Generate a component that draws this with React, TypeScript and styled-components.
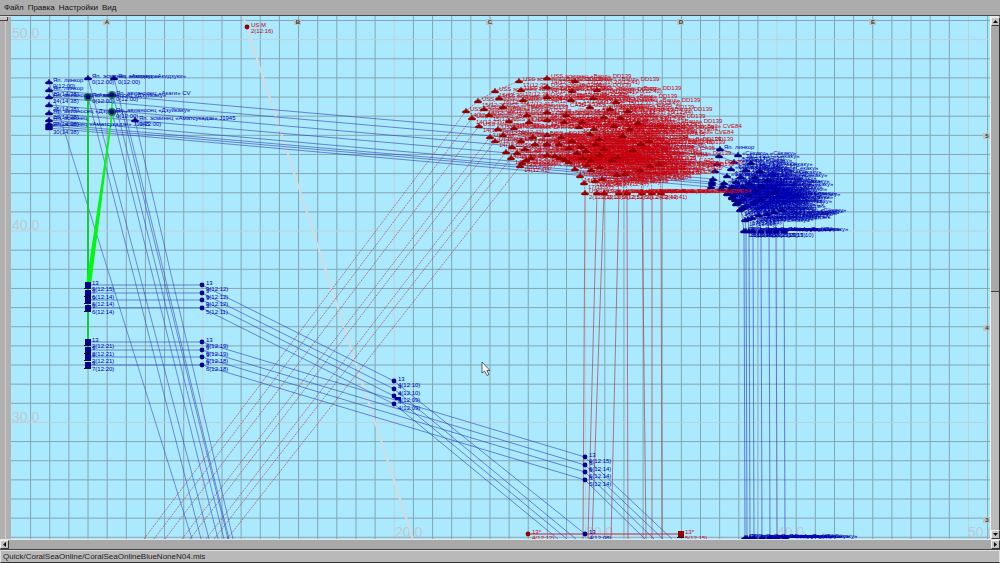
import React from "react";
import styled, { createGlobalStyle } from "styled-components";

const GlobalStyle = createGlobalStyle`
  *, *::before, *::after { box-sizing: border-box; }
  body { margin: 0; background: #acacac; font-family: "Liberation Sans", Arial, sans-serif; }
`;

const Window = styled.div`
  display: flex;
  flex-direction: column;
  height: 100vh;
  background: #acacac;
  overflow: hidden;
`;

const MenuBar = styled.nav`
  display: flex;
  flex: none;
  gap: 4px;
  height: 16px;
  padding: 0 4px;
  border-bottom: 1px solid #4c4c4c;
`;

const MenuItem = styled.button`
  padding: 0;
  border: 0;
  background: none;
  color: #141414;
  font: 8px/15px "Liberation Sans", Arial, sans-serif;
`;

const Workspace = styled.main`
  display: flex;
  flex: 1;
  min-height: 0;
`;

const Gutter = styled.div`
  display: flex;
  flex: none;
  width: 11px;
  background: #b0b0b0;
  border-top: 1px solid #d8d8d8;
`;

const GutterSlider = styled.div`
  width: 6px;
  border-right: 1px solid #cfcfcf;

  &::before {
    content: "";
    display: block;
    width: 8px;
    height: 4px;
    background: #c4c4c4;
    border-right: 1px solid #404040;
    border-bottom: 1px solid #404040;
  }
`;

const MapSurface = styled.svg`
  display: block;
  flex: 1;
  min-width: 0;
  height: 100%;
  background: #abe9ff;
`;

const Track = styled.div<{ $vertical?: boolean }>`
  display: flex;
  flex: none;
  flex-direction: ${(p) => (p.$vertical ? "column" : "row")};
  width: ${(p) => (p.$vertical ? "10px" : "auto")};
  height: ${(p) => (p.$vertical ? "auto" : "11px")};
  background: ${(p) => (p.$vertical ? "#bababa" : "#a8a8a8")};
  border-top: 1px solid #e6e6e6;
  border-bottom: ${(p) => (p.$vertical ? "0" : "1px solid #444")};
  border-left: ${(p) => (p.$vertical ? "1px solid #f4f4f4" : "0")};
  border-right: ${(p) => (p.$vertical ? "1px solid #303030" : "0")};
`;

const Thumb = styled.div<{ $size: string }>`
  flex: 0 0 ${(p) => p.$size};
  background: #a8a8a8;
  border-bottom: 1px solid #404040;
`;

const Filler = styled.div`
  flex: 1;
`;

const ScrollButton = styled.button`
  display: grid;
  place-items: center;
  flex: none;
  width: 9px;
  height: 9px;
  padding: 0;
  background: #c4c4c4;
  border: 1px solid;
  border-color: #eee #383838 #383838 #eee;
`;

const StatusBar = styled.footer`
  flex: none;
  height: 13px;
  padding: 0 2px;
  background: #b9b9b9;
  border: 1px solid #e0e0e0;
  border-bottom-color: #333;
  color: #1c1c1c;
  font: 8px/11px "Liberation Sans", Arial, sans-serif;
`;

const CoordText = styled.text`
  font: 14px "Liberation Sans", Arial, sans-serif;
  fill: #bccbd2;
`;

const UnitText = styled.text`
  font: 6px "Liberation Sans", Arial, sans-serif;
`;

const SectorText = styled.text`
  font: bold 6px "Liberation Sans", Arial, sans-serif;
  text-anchor: middle;
  fill: #333;
`;

type Point = [number, number];
type Shape = "ship" | "dot" | "square";

const RED = "#c8000c";
const BLUE = "#0000b0";
const CELL = 19.14;

const SHIP = "M0-3 1-1 3 0 4 1 3 2H-3L-4 1-3 0-1-1Z";

function Marker({ at: [x, y], shape, side }: { at: Point; shape: Shape; side: string }) {
  const fill = side === RED ? "#960000" : "#000088";
  if (shape === "dot") return <circle cx={x} cy={y} r={2.4} fill={fill} />;
  if (shape === "square")
    return (
      <g transform={`translate(${x} ${y})`}>
        <rect x={-3} y={-3} width={6} height={6} fill={fill} />
        <path d="M-4 3.5H3" stroke="#061030" />
      </g>
    );
  return <path d={SHIP} transform={`translate(${x} ${y})`} fill={fill} stroke={fill} strokeWidth={0.4} />;
}

function Unit(props: { at: Point; shape?: Shape; side: string; name?: string; time?: string }) {
  const { at, shape = "ship", side, name, time } = props;
  const [x, y] = at;
  return (
    <g>
      {name && <UnitText x={x + 4} y={y} fill={side}>{name}</UnitText>}
      {time && <UnitText x={x + 4} y={y + 6} fill={side}>{time}</UnitText>}
      <Marker at={at} shape={shape} side={side} />
    </g>
  );
}

function Route({ points, color, dashed }: { points: Point[]; color: string; dashed?: boolean }) {
  return (
    <polyline
      points={points.map((p) => p.join(",")).join(" ")}
      fill="none"
      stroke={color}
      strokeWidth={0.7}
      strokeDasharray={dashed ? "2 1" : undefined}
      opacity={0.8}
    />
  );
}

function Grid() {
  const lines = Array.from({ length: 160 }, (_, i) => i);
  const tone = (i: number, major: number) => (i % 10 === major ? "#bfd0d8" : "#86a5b1");
  return (
    <g strokeWidth={1}>
      {lines.map((i) => {
        const x = 30.6 + i * CELL;
        return <line key={`v${i}`} x1={x} x2={x} y1={0} y2={3000} stroke={tone(i, 9)} />;
      })}
      {lines.map((i) => {
        const y = 20.5 + i * CELL;
        return <line key={`h${i}`} x1={0} x2={4000} y1={y} y2={y} stroke={tone(i, 1)} />;
      })}
    </g>
  );
}

function SectorTag({ at: [x, y], text }: { at: Point; text: string }) {
  return (
    <g>
      <rect x={x - 4} y={y - 3} width={7} height={6} fill="#bcc4c7" />
      <SectorText x={x} y={y + 2}>{text}</SectorText>
    </g>
  );
}

/* Successive formation positions of the eight American ships. */
const redFormation: Point[][] = [
  [[466, 111], [472, 118], [479, 126], [490, 137], [495, 141], [506, 152], [511, 158], [520, 166]],
  [[478, 101], [484, 109], [489, 115], [498, 129], [503, 135], [512, 147], [517, 153], [522, 163]],
  [[495, 91], [499, 98], [503, 107], [509, 121], [514, 128], [521, 141], [525, 149], [526, 160]],
  [[519, 81], [521, 90], [523, 100], [527, 115], [529, 122], [533, 137], [535, 144], [531, 158]],
  [[547, 78], [547, 87], [547, 97], [547, 112], [547, 120], [547, 135], [547, 144], [547, 155]],
  [[575, 81], [572, 91], [571, 100], [566, 115], [564, 122], [561, 137], [559, 144], [555, 156]],
  [[597, 90], [593, 98], [590, 107], [582, 122], [579, 127], [572, 141], [569, 148], [560, 158]],
  [[616, 102], [610, 109], [604, 117], [594, 129], [590, 134], [581, 147], [577, 153], [565, 160]],
  [[628, 111], [621, 118], [614, 126], [599, 139], [596, 144], [586, 151], [583, 158], [569, 162]],
  [[638, 123], [630, 129], [623, 136], [604, 149], [600, 155], [591, 160], [587, 165], [575, 169]],
  [[649, 141], [641, 144], [633, 150], [618, 157], [612, 160], [600, 167], [591, 170], [580, 176]],
  [[659, 164], [650, 166], [640, 170], [625, 174], [617, 175], [602, 179], [595, 181], [584, 183]],
  [[661, 193], [652, 193], [642, 193], [627, 193], [619, 193], [604, 193], [597, 193], [585, 193]],
];
const redSouth = [144, 154, 165, 182, 190, 206, 214, 227];
const redColumns = [662, 652, 646, 628, 611, 592, 588, 583];
const redNames = [
  "USS эсминец «Вард» DD139",
  "USS эсминец «Вард» DD139",
  "USS «Индианаполис» CA35",
  "USS ав. «Шамрок Бей» CVE84",
  "USS эсминец «Вард» DD139",
  "USS ав. «Шамрок Бей» CVE84",
  "USS ав. «Шамрок Бей» CVE84",
  "USS эсминец «Вард» DD139",
];

/* Successive formation positions of the eight Japanese ships. */
const blueFormation: Point[][] = [
  [[720, 149], [719, 156], [717, 164], [715, 171], [713, 179], [712, 182], [712, 184], [711, 187]],
  [[738, 155], [734, 162], [731, 169], [727, 176], [724, 183], [723, 186], [722, 189], [721, 189]],
  [[751, 163], [746, 170], [741, 177], [736, 182], [732, 187], [730, 190], [728, 193], [727, 194]],
  [[760, 171], [755, 177], [749, 183], [743, 187], [737, 192], [734, 195], [732, 198], [732, 197]],
  [[768, 180], [761, 186], [755, 191], [748, 195], [742, 199], [739, 202], [736, 204], [735, 200]],
  [[775, 192], [768, 196], [761, 199], [754, 203], [746, 206], [743, 208], [740, 210], [737, 203]],
  [[782, 210], [774, 212], [767, 214], [759, 215], [752, 218], [748, 219], [745, 220], [741, 209]],
  [[784, 231], [776, 231], [769, 231], [761, 231], [753, 231], [749, 231], [746, 231], [744, 231]],
];
const blueNames = [
  "Яп. линкор",
  "Яп. авианосец «Сёкаку»",
  "Яп. эсминец «Акидзуки»",
  "Яп. авианосец «Дзуйкаку»",
  "Яп. авианосец «Акаги» CV",
  "Яп. эсминец «Аматсукадзе»",
  "Яп. эсминец «Акидзуки»",
  "Яп. авианосец «Сёкаку»",
];
const westY = [90, 97, 105, 113, 120, 124, 126, 128];

const steepRoutes: Point[][] = [
  [[49, 82], [192, 539]],
  [[88, 97], [201, 539]],
  [[88, 78], [209, 539]],
  [[112, 112], [218, 539]],
  [[113, 95], [224, 539]],
  [[114, 78], [228, 539]],
  [[125, 113], [229, 539]],
  [[135, 120], [233, 539]],
];

const flightRows = [0, 1, 2, 3];

function RedFleet() {
  return (
    <g>
      {redSouth.map((south, i) => (
        <React.Fragment key={i}>
          <Route
            dashed
            color="#ad2038"
            points={[[south, 539], ...redFormation.map((row) => row[i])]}
          />
          <Route color="#b01828" points={[redFormation[12][i], [redColumns[i], 539]]} />
        </React.Fragment>
      ))}
      {redFormation.slice(4, 12).map((row, r) =>
        row.map(([x, y], i) => (
          <React.Fragment key={`${r}-${i}`}>
            <UnitText x={x + 12} y={y + 3} fill={RED}>
              {`${12 + r}(12:${31 + i}) ${20 + i}(12:${40 + r})`}
            </UnitText>
            {y > 119 && y < 174 && x < 640 && (
              <UnitText x={x + 18} y={y + 5} fill={RED}>
                {redNames[(i + r) % 7]}
              </UnitText>
            )}
          </React.Fragment>
        ))
      )}
      {redFormation.map((row, r) =>
        row.map((at, i) => (
          <Unit
            key={`${r}-${i}`}
            at={at}
            side={RED}
            name={redNames[r === 12 ? 3 : i]}
            time={`${r === 12 ? 2 : 14 + (r % 4)}(12:${20 + ((r * 5 + i * 3) % 39)})`}
          />
        ))
      )}
    </g>
  );
}

function BlueFleet() {
  return (
    <g>
      {blueFormation[0].map((_, i) => (
        <React.Fragment key={i}>
          <Route color="#2636a8" points={[[49, westY[i]], ...blueFormation.map((row) => row[i])]} />
          <Route color="#1c24b8" points={[blueFormation[7][i], [blueFormation[7][i][0] + 1, 539]]} />
        </React.Fragment>
      ))}
      {blueFormation.slice(1, 7).map((row, r) =>
        row.slice(0, 6).map(([x, y], i) => (
          <React.Fragment key={`${r}-${i}`}>
            <UnitText x={x + 8} y={y + 3} fill={BLUE}>
              {`${15 + r}(13:${21 + i}) «Сёкаку»`}
            </UnitText>
            {y < 212 && (
              <UnitText x={x + 10} y={y + 5} fill={BLUE}>
                {`Яп. ${13 + r}(13:${31 + i})`}
              </UnitText>
            )}
          </React.Fragment>
        ))
      )}
      {blueFormation.map((row, r) =>
        row.map((at, i) => (
          <Unit
            key={`${r}-${i}`}
            at={at}
            side={BLUE}
            name={r === 0 && i > 0 ? undefined : r === 1 ? "«Сёкаку» «Сёкаку»" : blueNames[i]}
            time={r === 0 ? undefined : `${r + 11}(13:${10 + ((r * 7 + i * 5) % 49)})`}
          />
        ))
      )}
      {blueFormation[7].map(([x], i) => (
        <Unit key={i} at={[x + 1, 538]} side={BLUE} name={blueNames[i || 7]} />
      ))}
    </g>
  );
}

function WestGroup() {
  return (
    <g>
      {steepRoutes.map((points, i) => (
        <Route key={i} color="#3040b0" points={points} />
      ))}
      <rect x={87} y={97} width={2} height={253} fill="#18c838" />
      <path d="M112 95 110 124 86 285H91L113 112Z" fill="#00f810" />
      {([[88, 97], [112, 95], [112, 112]] as Point[]).map(([x, y]) => (
        <circle key={y} cx={x} cy={y} r={4} fill="#168040" />
      ))}
      {[82, ...westY].map((y, i) => (
        <Unit
          key={y}
          at={[49, y]}
          side={BLUE}
          name={["Яп. линкор", "Яп. линкор", "Яп. авианосец «Акаги»", "", "Яп. авианосец «Дзуйкаку»", "Яп. эсминец", "", "Яп. эсминец «Аматсукадзе» J1945", ""][i]}
          time={i === 0 ? "0(12:00)" : i < 6 || i === 8 ? `${22 + i}(14:38)` : undefined}
        />
      ))}
      <Unit at={[88, 78]} side={BLUE} name="Яп. эсминец «Акидзуки»" time="0(12:00)" />
      <Unit at={[114, 78]} side={BLUE} name="Яп. эсминец «Акидзуки»" time="0(12:00)" />
      <Unit at={[88, 97]} side={BLUE} shape="dot" name="Яп. авианосец «Дзуйкаку»" time="0(12:00)" />
      <Unit at={[112, 95]} side={BLUE} shape="dot" name="Яп. авианосец «Акаги» CV" time="0(12:00)" />
      <Unit at={[112, 112]} side={BLUE} shape="dot" name="Яп. авианосец «Дзуйкаку»" time="0(12:00)" />
      <Unit at={[135, 120]} side={BLUE} name="Яп. эсминец «Аматсукадзе» J1945" time="0(12:00)" />
    </g>
  );
}

const middleTimes = ["9(12:12)", "9(12:12)", "9(12:12)", "5(12:11)"];
const westTimes = ["5(12:15)", "6(12:14)", "6(12:14)", "6(12:14)"];
const lowerWestTimes = ["2(12:21)", "2(12:21)", "2(12:21)", "7(12:20)"];
const lowerTimes = ["8(12:19)", "9(12:19)", "6(12:18)", "6(12:18)"];
const centreTimes = ["4(12:10)", "4(12:10)", "4(12:09)", "4(12:09)"];
const eastTimes = ["6(12:15)", "6(12:14)", "6(12:14)", "5(12:14)"];

function Flights() {
  return (
    <g>
      {flightRows.map((i) => {
        const d = Math.round(i * 7.7);
        const name = i === 0 ? "13" : "9";
        const exit = 585 - i * 9;
        return (
          <g key={i}>
            <Route color="#2434b4" points={[[88, 285 + d], [202, 285 + d], [394, 381 + d], [exit, i ? 539 : 534]]} />
            <Route color="#2434b4" points={[[88, 342 + d], [202, 342 + d], [585, 457 + d], [672 - i * 9, 539]]} />
            <Unit at={[88, 285 + d]} shape="square" side={BLUE} name={name} time={westTimes[i]} />
            <Unit at={[202, 285 + d]} shape="dot" side={BLUE} name={name} time={middleTimes[i]} />
            <Unit at={[88, 342 + d]} shape="square" side={BLUE} name={name} time={lowerWestTimes[i]} />
            <Unit at={[202, 342 + d]} shape="dot" side={BLUE} name={name} time={lowerTimes[i]} />
            <Unit at={[394, 381 + d]} shape="dot" side={BLUE} name={i ? "4" : name} time={centreTimes[i]} />
            <Unit at={[585, 457 + d]} shape="dot" side={BLUE} name={i ? "6" : name} time={eastTimes[i]} />
          </g>
        );
      })}
      <path d="M394 397h7v3h-6z" fill={BLUE} />
      <path d="M528 534H681" stroke="#d02030" />
      <Unit at={[528, 534]} shape="dot" side={RED} name="13*" time="4(12:12)" />
      <Unit at={[585, 534]} shape="dot" side={BLUE} name="13" time="4(12:08)" />
      <Unit at={[681, 534]} shape="square" side={RED} name="13*" time="5(12:15)" />
      <Unit at={[247, 27]} shape="dot" side={RED} name="US M" time="2(12:16)" />
    </g>
  );
}

function MissionMap() {
  return (
    <MapSurface role="img" aria-label="Карта миссии">
      <g transform="translate(-11 -16)">
        <Grid />
        {["50.0", "40.0", "30.0"].map((t, i) => (
          <CoordText key={t} x={12} y={38 + i * 192}>{t}</CoordText>
        ))}
        {["20.0", "30.0", "40.0", "50.0"].map((t, i) => (
          <CoordText key={t} x={395 + i * 191} y={537}>{t}</CoordText>
        ))}
        <path d="M243 16 413 539" stroke="#d3dce0" strokeWidth={2} />
        <BlueFleet />
        <RedFleet />
        <WestGroup />
        <Flights />
        {["A", "B", "C", "D", "E"].map((t, i) => (
          <SectorTag key={t} at={[107 + Math.round(i * 191.4), 22]} text={t} />
        ))}
        {["5", "4", "3"].map((t, i) => (
          <SectorTag key={t} at={[987, 136 + i * 192]} text={t} />
        ))}
        <path
          d="M482 362V373L484.500 371 487 375.500 489 374.500 486.800 370.500H490Z"
          fill="#fff"
          stroke="#222"
          strokeWidth={0.7}
        />
      </g>
    </MapSurface>
  );
}

function Arrow({ path }: { path: string }) {
  return (
    <svg width="5" height="5" viewBox="0 0 5 5" aria-hidden="true">
      <path d={path} fill="#111" />
    </svg>
  );
}

export default function App() {
  return (
    <Window>
      <GlobalStyle />
      <MenuBar>
        {["Файл", "Правка", "Настройки", "Вид"].map((item) => (
          <MenuItem key={item} type="button">{item}</MenuItem>
        ))}
      </MenuBar>
      <Workspace>
        <Gutter>
          <GutterSlider />
        </Gutter>
        <MissionMap />
        <Track $vertical>
          <ScrollButton type="button" aria-label="Вверх">
            <Arrow path="M0 4 2.500 1 5 4Z" />
          </ScrollButton>
          <Thumb $size="51%" />
          <Filler />
          <ScrollButton type="button" aria-label="Вниз">
            <Arrow path="M0 1 2.500 4 5 1Z" />
          </ScrollButton>
        </Track>
      </Workspace>
      <Track>
        <ScrollButton type="button" aria-label="Влево">
          <Arrow path="M4 0 1 2.500 4 5Z" />
        </ScrollButton>
        <Filler />
        <ScrollButton type="button" aria-label="Вправо">
          <Arrow path="M1 0 4 2.500 1 5Z" />
        </ScrollButton>
      </Track>
      <StatusBar>Quick/CoralSeaOnline/CoralSeaOnlineBlueNoneN04.mis</StatusBar>
    </Window>
  );
}
